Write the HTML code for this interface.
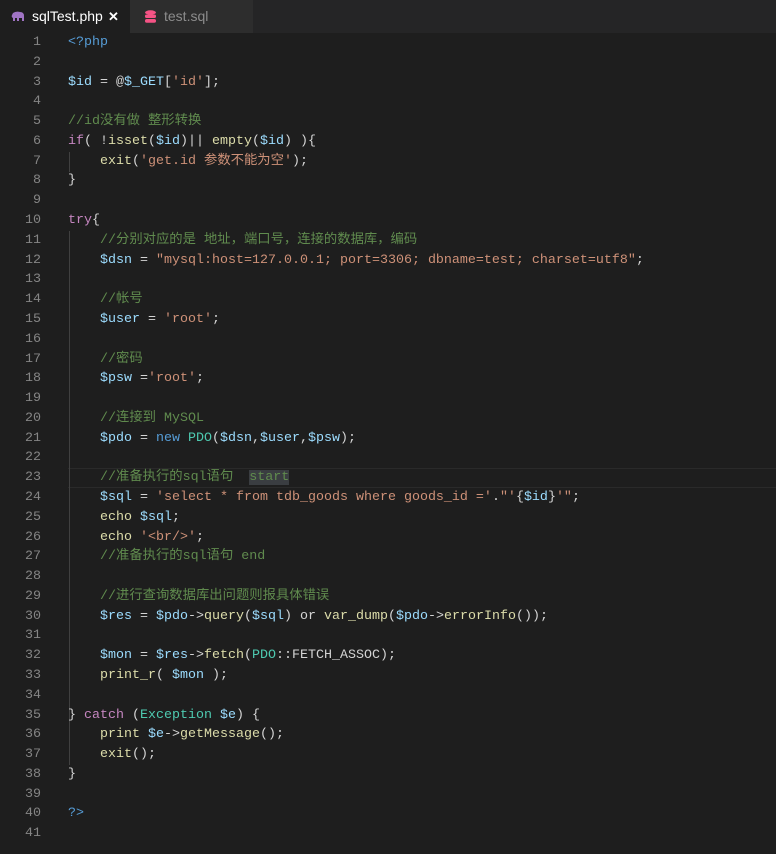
<!DOCTYPE html>
<html><head><meta charset="utf-8"><style>
html,body{margin:0;padding:0;background:#1e1e1e;width:776px;height:854px;overflow:hidden}
.tabs{height:33px;background:#252526;position:relative;font-family:"Liberation Sans","Noto Sans CJK SC",sans-serif;font-size:14px}
.tab{position:absolute;top:0;height:33px;line-height:33px}
.t1{left:0;width:130px;background:#1e1e1e;color:#fff}
.t2{left:130px;width:123px;background:#2d2d2d;color:#8c8c8c}
.ed{position:relative;font-family:"Liberation Mono","Noto Sans CJK SC",monospace;font-size:13.33px;line-height:19.78px;color:#d4d4d4}
.ln{position:absolute;left:0;width:41px;text-align:right;color:#858585}
.code{position:absolute;left:68px;top:0;white-space:pre}
.cur{position:absolute;left:68px;right:0;top:435px;height:18px;border-top:1px solid #2a2a2a;border-bottom:1px solid #2a2a2a}
.g{position:absolute;left:69px;width:1px;background:#404040}
.v{color:#9cdcfe}.s{color:#ce9178}.c{color:#608b4e}.f{color:#dcdcaa}.k{color:#c586c0}.b{color:#569cd6}.t{color:#4ec9b0}
.hl{background:#3a3d41}
</style></head><body>
<div class="tabs">
<div class="tab t1"><svg style="position:absolute;left:11px;top:11px" width="14" height="11" viewBox="0 0 14 11"><path d="M2 2 Q5 0 9 1 Q13 1 13 5 L13 10 L11 10 L11 7 L8 7 L8 10 L6 10 L6 7 L4 7 L4 10 L2 10 L2 7 Q0 6 1 4 Z" fill="#a074c4"/></svg><span style="position:absolute;left:32px">sqlTest.php</span><span style="position:absolute;left:108px;font-size:13px;font-weight:bold">✕</span></div>
<div class="tab t2"><svg style="position:absolute;left:15px;top:10px" width="11" height="13" viewBox="0 0 11 13"><ellipse cx="5.5" cy="2.5" rx="5.5" ry="2.2" fill="#f55385"/><rect x="0" y="4.5" width="11" height="3.5" rx="1.5" fill="#f55385"/><rect x="0" y="9" width="11" height="3.8" rx="1.8" fill="#f55385"/></svg><span style="position:absolute;left:34px">test.sql</span></div>
</div>
<div class="ed">
<div class="cur"></div>
<div class="g" style="top:119px;height:20px"></div>
<div class="g" style="top:198px;height:534px"></div>
<div class="ln" id="ln"></div>
<div class="code"><span class="b">&lt;?php</span>

<span class="v">$id</span> = @<span class="v">$_GET</span>[<span class="s">'id'</span>];

<span class="c">//id没有做 整形转换</span>
<span class="k">if</span>( !<span class="f">isset</span>(<span class="v">$id</span>)|| <span class="f">empty</span>(<span class="v">$id</span>) ){
    <span class="f">exit</span>(<span class="s">'get.id 参数不能为空'</span>);
}

<span class="k">try</span>{
    <span class="c">//分别对应的是 地址，端口号，连接的数据库，编码</span>
    <span class="v">$dsn</span> = <span class="s">"mysql:host=127.0.0.1; port=3306; dbname=test; charset=utf8"</span>;

    <span class="c">//帐号</span>
    <span class="v">$user</span> = <span class="s">'root'</span>;

    <span class="c">//密码</span>
    <span class="v">$psw</span> =<span class="s">'root'</span>;

    <span class="c">//连接到 MySQL</span>
    <span class="v">$pdo</span> = <span class="b">new</span> <span class="t">PDO</span>(<span class="v">$dsn</span>,<span class="v">$user</span>,<span class="v">$psw</span>);

    <span class="c">//准备执行的sql语句  <span class="hl">start</span></span>
    <span class="v">$sql</span> = <span class="s">'select * from tdb_goods where goods_id ='</span>.<span class="s">"'</span>{<span class="v">$id</span>}<span class="s">'"</span>;
    <span class="f">echo</span> <span class="v">$sql</span>;
    <span class="f">echo</span> <span class="s">'&lt;br/&gt;'</span>;
    <span class="c">//准备执行的sql语句 end</span>

    <span class="c">//进行查询数据库出问题则报具体错误</span>
    <span class="v">$res</span> = <span class="v">$pdo</span>-&gt;<span class="f">query</span>(<span class="v">$sql</span>) or <span class="f">var_dump</span>(<span class="v">$pdo</span>-&gt;<span class="f">errorInfo</span>());

    <span class="v">$mon</span> = <span class="v">$res</span>-&gt;<span class="f">fetch</span>(<span class="t">PDO</span>::FETCH_ASSOC);
    <span class="f">print_r</span>( <span class="v">$mon</span> );

} <span class="k">catch</span> (<span class="t">Exception</span> <span class="v">$e</span>) {
    <span class="f">print</span> <span class="v">$e</span>-&gt;<span class="f">getMessage</span>();
    <span class="f">exit</span>();
}

<span class="b">?&gt;</span>
</div>
</div>
<script>
var s='';for(var i=1;i<=41;i++)s+=i+'<br>';document.getElementById('ln').innerHTML=s;
</script>
</body></html>
